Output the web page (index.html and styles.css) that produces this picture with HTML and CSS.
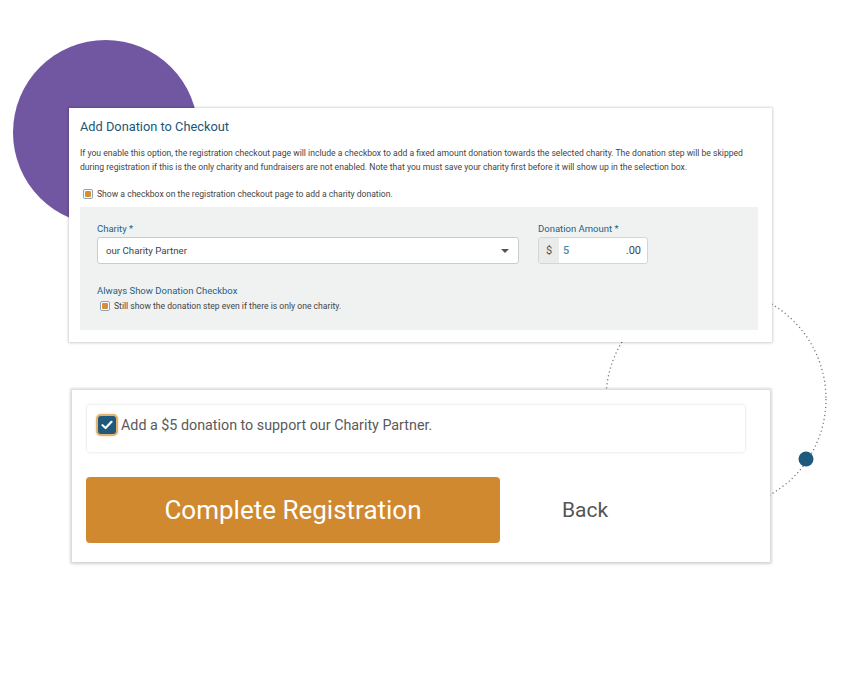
FILE: index.html
```html
<!DOCTYPE html>
<html lang="en">
<head>
<meta charset="utf-8">
<title>Donation checkout</title>
<link rel="stylesheet" href="styles.css">
</head>
<body>
<div class="stage">
  <div class="blob"></div>
  <svg class="orbit" width="841" height="674" viewBox="0 0 841 674">
    <circle cx="716" cy="399" r="110" fill="none" stroke="#7a7a7a" stroke-width="1.3" stroke-dasharray="1.2 2.8"/>
    <circle cx="806" cy="459" r="7.5" fill="#1d5a7e"/>
  </svg>

  <section class="card card-admin">
    <h2 class="title">Add Donation to Checkout</h2>
    <p class="desc">If you enable this option, the registration checkout page will include a checkbox to add a fixed amount donation towards the selected charity. The donation step will be skipped during registration if this is the only charity and fundraisers are not enabled. Note that you must save your charity first before it will show up in the selection box.</p>
    <label class="check-row">
      <span class="mini-check"><span class="mini-fill"></span></span>
      <span>Show a checkbox on the registration checkout page to add a charity donation.</span>
    </label>
    <div class="panel">
      <div class="fields">
        <div class="field field-charity">
          <div class="field-label">Charity *</div>
          <div class="select">
            <span>our Charity Partner</span>
            <span class="caret"></span>
          </div>
        </div>
        <div class="field field-amount">
          <div class="field-label">Donation Amount *</div>
          <div class="amount">
            <span class="addon">$</span>
            <span class="amount-val">5</span>
            <span class="cents">.00</span>
          </div>
        </div>
      </div>
      <div class="field-label always">Always Show Donation Checkbox</div>
      <label class="check-row small">
        <span class="mini-check"><span class="mini-fill"></span></span>
        <span>Still show the donation step even if there is only one charity.</span>
      </label>
    </div>
  </section>

  <section class="card card-checkout">
    <div class="donate-box">
      <span class="big-check">
        <svg width="12" height="10" viewBox="0 0 12 10"><path d="M1.5 5.2 L4.6 8 L10.5 1.8" fill="none" stroke="#fff" stroke-width="2.2" stroke-linecap="round" stroke-linejoin="round"/></svg>
      </span>
      <span class="donate-text">Add a $5 donation to support our Charity Partner.</span>
    </div>
    <div class="actions">
      <button class="btn-complete">Complete Registration</button>
      <span class="back">Back</span>
    </div>
  </section>
</div>
</body>
</html>
```
FILE: styles.css
```css
* { box-sizing: border-box; }
html, body { margin: 0; padding: 0; background: #fff; }
body { font-family: Roboto, "Noto Sans", Arial, sans-serif; }

.stage {
  position: relative;
  width: 841px;
  height: 674px;
  padding-top: 108px;
  overflow: hidden;
}

.blob {
  position: absolute;
  left: 13px;
  top: 40px;
  width: 185px;
  height: 185px;
  border-radius: 50%;
  background: #7157a2;
}

.orbit {
  position: absolute;
  left: 0;
  top: 0;
}

.card {
  position: relative;
  background: #fff;
}

.card-admin {
  margin-left: 69px;
  width: 703px;
  height: 234px;
  padding: 11px 14px 13px 11px;
  box-shadow: 0 0 2px 1px rgba(0,0,0,0.13), 0 1px 4px rgba(0,0,0,0.08);
}

.title {
  margin: 0;
  font-size: 12.8px;
  line-height: 16px;
  font-weight: 400;
  color: #1b5678;
}

.desc {
  margin: 11px 0 0;
  font-size: 8.6px;
  line-height: 14px;
  color: #444;
  padding-right: 4px;
}

.check-row {
  display: flex;
  align-items: center;
  gap: 4px;
  margin-top: 13px;
  margin-left: 3px;
  font-size: 8.6px;
  line-height: 14px;
  color: #444;
}

.mini-check {
  width: 10px;
  height: 10px;
  border: 1px solid #8aa4b8;
  border-radius: 2px;
  background: #fff;
  display: flex;
  align-items: center;
  justify-content: center;
  flex: none;
}
.mini-fill {
  width: 6px;
  height: 6px;
  background: #d58f38;
  border-radius: 1px;
}

.panel {
  margin-top: 6px;
  height: 123px;
  background: #f0f1f1;
  padding: 16px 17px 0;
}

.fields {
  display: flex;
  gap: 19px;
}

.field-label {
  font-size: 9.5px;
  line-height: 12px;
  color: #1f6185;
}

.field-charity { width: 422px; }
.field-amount { width: 110px; }

.select {
  margin-top: 2px;
  height: 27px;
  background: #fff;
  border: 1px solid #c9cccf;
  border-radius: 3px;
  display: flex;
  align-items: center;
  justify-content: space-between;
  padding: 0 8px 0 8px;
  font-size: 9.7px;
  color: #444;
}
.caret {
  width: 0;
  height: 0;
  border-left: 4px solid transparent;
  border-right: 4px solid transparent;
  border-top: 4px solid #555;
  margin-right: 1px;
}

.amount {
  margin-top: 2px;
  height: 27px;
  display: flex;
  background: #fff;
  border: 1px solid #d3d6d8;
  border-radius: 3px;
  font-size: 11px;
  overflow: hidden;
}
.addon {
  width: 20px;
  background: #eaebeb;
  color: #555;
  display: flex;
  align-items: center;
  justify-content: center;
}
.amount-val {
  flex: 1;
  display: flex;
  align-items: center;
  padding-left: 4px;
  color: #4d88ae;
  font-weight: 500;
}
.cents {
  display: flex;
  align-items: center;
  padding-right: 6px;
  color: #444;
}

.always { margin-top: 21px; }

.check-row.small {
  margin-top: 2px;
  margin-left: 3px;
  font-size: 8.6px;
}

.card-checkout {
  margin-top: 48px;
  margin-left: 72px;
  width: 698px;
  height: 172px;
  padding: 15px 25px 0 15px;
  box-shadow: 0 0 2px 2px rgba(0,0,0,0.11), 0 1px 5px rgba(0,0,0,0.1);
}

.donate-box {
  height: 47px;
  background: #fff;
  border-radius: 3px;
  box-shadow: 0 0 3px rgba(0,0,0,0.16);
  display: flex;
  align-items: center;
  padding-left: 9px;
  gap: 3px;
  padding-bottom: 8px;
}

.big-check {
  width: 22px;
  height: 22px;
  border-radius: 5px;
  background: #1f5a7c;
  border: 2px solid #e3b170;
  box-shadow: 0 0 2px rgba(227,177,112,0.8);
  display: flex;
  align-items: center;
  justify-content: center;
}

.donate-text {
  font-size: 14.3px;
  color: #5a5a5a;
}

.actions {
  margin-top: 25px;
  display: flex;
  align-items: center;
}

.btn-complete {
  width: 414px;
  height: 66px;
  margin-left: -1px;
  border: none;
  border-radius: 4px;
  background: #d0892e;
  color: #fff;
  font-family: Roboto, "Noto Sans", Arial, sans-serif;
  font-size: 26px;
  padding: 0;
  padding-bottom: 0;
}

.back {
  margin-left: 62px;
  font-size: 21px;
  color: #555;
}
```
